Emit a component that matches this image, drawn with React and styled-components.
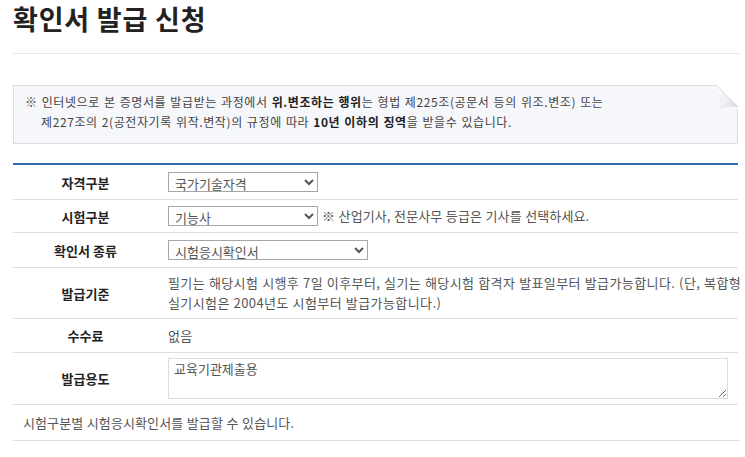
import styled, { createGlobalStyle } from "styled-components";

const GlobalStyle = createGlobalStyle`
  html, body {
    margin: 0;
    padding: 0;
    background: #fff;
  }
  body {
    font-family: "Noto Sans CJK KR", "Noto Sans", sans-serif;
    color: #333;
  }
`;

const Page = styled.div`
  width: 727px;
  margin-left: 13px;
`;

const Title = styled.h2`
  margin: 0;
  padding-top: 1px;
  height: 52px;
  font-size: 27px;
  line-height: 36px;
  font-weight: 700;
  letter-spacing: 0.8px;
  color: #222;
  border-bottom: 1px solid #e8e8e8;
`;

const Notice = styled.div`
  position: relative;
  margin-top: 31px;
  width: 725px;
  box-sizing: border-box;
  padding: 6px 30px 11px 27px;
  text-indent: -16px;
  background: #f6f7fb;
  border: 1px solid #dcdde2;
  font-size: 12px;
  line-height: 20px;
  color: #444;
  letter-spacing: 0.6px;
  word-spacing: 0.8px;

  b {
    color: #222;
  }
`;

const Fold = styled.svg`
  position: absolute;
  top: -1px;
  right: -1px;
`;

const Table = styled.div`
  margin-top: 19px;
  width: 725px;
  border-top: 2px solid #2e6bb3;
`;

const Row = styled.div`
  display: grid;
  grid-template-columns: 145px 1fr;
  align-items: center;
  min-height: ${(p) => p.$h}px;
  border-bottom: 1px solid #dedede;
`;

const Label = styled.div`
  text-align: center;
  font-size: 13px;
  font-weight: 700;
  color: #222;
`;

const Value = styled.div`
  display: flex;
  align-items: center;
  gap: 4px;
  padding: 0 0 0 10px;
  font-size: 13px;
  line-height: 20px;
  color: #555;
  letter-spacing: 0.4px;
  word-spacing: 0.5px;
  white-space: nowrap;
`;

const Hint = styled.span`
  letter-spacing: 0.1px;
`;

const Select = styled.select`
  width: ${(p) => p.$w}px;
  height: 20px;
  box-sizing: border-box;
  padding: 0 2px;
  border: 1px solid #a6a6a6;
  border-radius: 0;
  background: #fff;
  font-family: inherit;
  font-size: 13px;
  letter-spacing: 0;
  color: #555;
`;

const TextArea = styled.textarea`
  width: 560px;
  height: 41px;
  box-sizing: border-box;
  margin: 0;
  padding: 2px 5px;
  border: 1px solid #dcdcdc;
  font-family: inherit;
  font-size: 13px;
  line-height: 16px;
  letter-spacing: 0;
  color: #555;
  resize: both;
`;

const Footer = styled.div`
  padding: 0 10px;
  height: 35px;
  display: flex;
  align-items: center;
  font-size: 13px;
  color: #555;
  border-bottom: 1px solid #dedede;
  letter-spacing: 0.1px;
  word-spacing: 0.5px;
`;

export default function App() {
  return (
    <>
      <GlobalStyle />
      <Page>
        <Title>확인서 발급 신청</Title>

        <Notice>
          ※ 인터넷으로 본 증명서를 발급받는 과정에서 <b>위.변조하는 행위</b>는 형법 제225조(공문서 등의 위조.변조) 또는
          <br />
          제227조의 2(공전자기록 위작.변작)의 규정에 따라 <b>10년 이하의 징역</b>을 받을수 있습니다.
          <Fold width="22" height="24" viewBox="0 0 22 24">
            <defs>
              <linearGradient id="flap" x1="0" y1="0" x2="1" y2="1">
                <stop offset="0" stopColor="#ffffff" />
                <stop offset="0.6" stopColor="#eeeff3" />
                <stop offset="1" stopColor="#cfd0d5" />
              </linearGradient>
            </defs>
            <polygon points="0,0 22,0 22,24" fill="#ffffff" />
            <path d="M0 0 L22 22 C16 21 8 22 4 24 C5 16 3 7 0 0 Z" fill="url(#flap)" />
            <path d="M0 0 L22 22" stroke="#d4d5da" strokeWidth="1" fill="none" />
          </Fold>
        </Notice>

        <Table>
          <Row $h={34}>
            <Label>자격구분</Label>
            <Value>
              <Select $w={150} defaultValue="국가기술자격">
                <option>국가기술자격</option>
              </Select>
            </Value>
          </Row>
          <Row $h={32}>
            <Label>시험구분</Label>
            <Value>
              <Select $w={150} defaultValue="기능사">
                <option>기능사</option>
              </Select>
              <Hint>※ 산업기사, 전문사무 등급은 기사를 선택하세요.</Hint>
            </Value>
          </Row>
          <Row $h={34}>
            <Label>확인서 종류</Label>
            <Value>
              <Select $w={200} defaultValue="시험응시확인서">
                <option>시험응시확인서</option>
              </Select>
            </Value>
          </Row>
          <Row $h={50}>
            <Label>발급기준</Label>
            <Value>
              <span>
                필기는 해당시험 시행후 7일 이후부터, 실기는 해당시험 합격자 발표일부터 발급가능합니다. (단, 복합형
                <br />
                실기시험은 2004년도 시험부터 발급가능합니다.)
              </span>
            </Value>
          </Row>
          <Row $h={33}>
            <Label>수수료</Label>
            <Value>없음</Value>
          </Row>
          <Row $h={51}>
            <Label>발급용도</Label>
            <Value>
              <TextArea defaultValue="교육기관제출용" />
            </Value>
          </Row>
        </Table>
        <Footer>시험구분별 시험응시확인서를 발급할 수 있습니다.</Footer>
      </Page>
    </>
  );
}
